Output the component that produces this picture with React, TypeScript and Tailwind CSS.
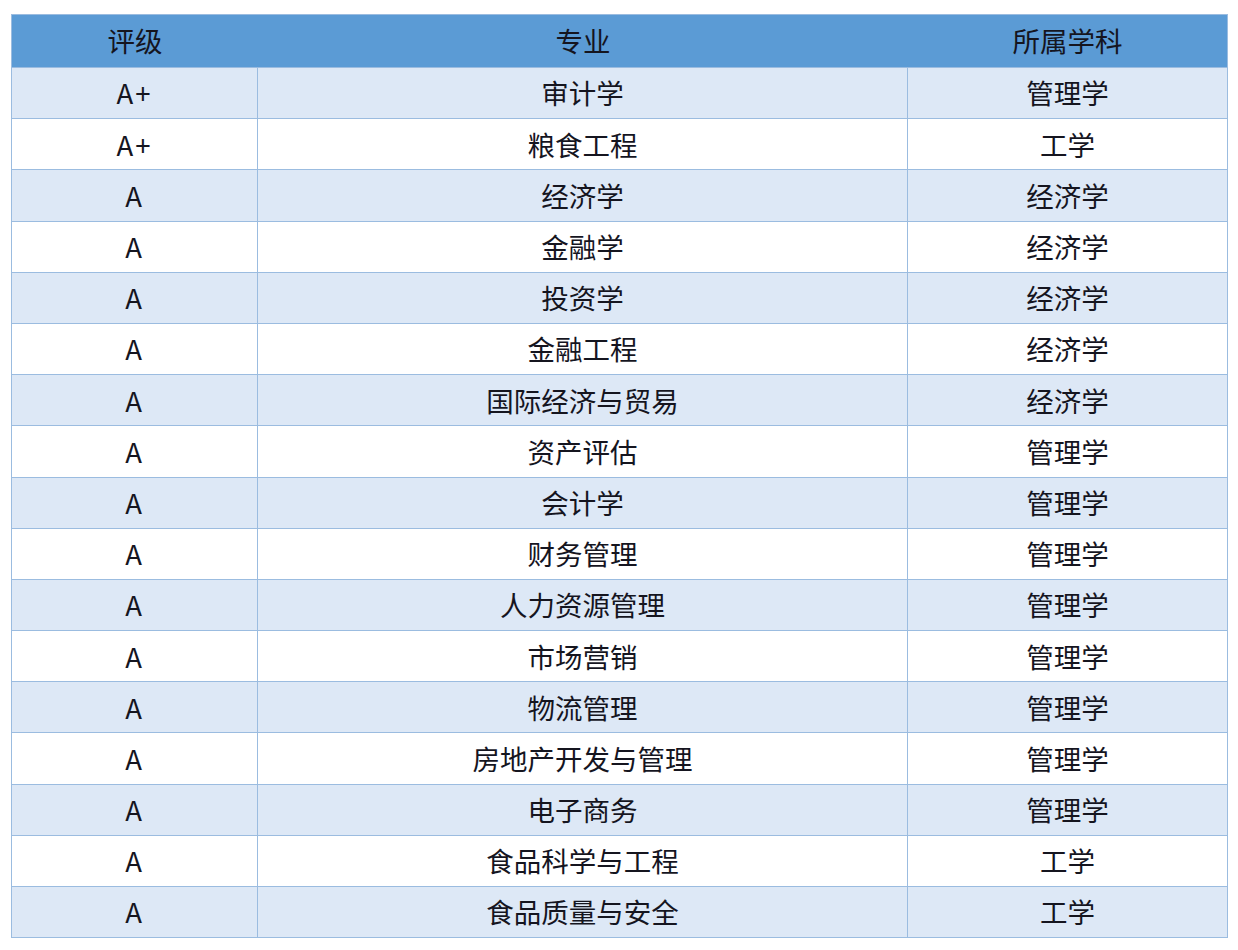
import React from 'react';

const rows = [
  ['A+', '审计学', '管理学'],
  ['A+', '粮食工程', '工学'],
  ['A', '经济学', '经济学'],
  ['A', '金融学', '经济学'],
  ['A', '投资学', '经济学'],
  ['A', '金融工程', '经济学'],
  ['A', '国际经济与贸易', '经济学'],
  ['A', '资产评估', '管理学'],
  ['A', '会计学', '管理学'],
  ['A', '财务管理', '管理学'],
  ['A', '人力资源管理', '管理学'],
  ['A', '市场营销', '管理学'],
  ['A', '物流管理', '管理学'],
  ['A', '房地产开发与管理', '管理学'],
  ['A', '电子商务', '管理学'],
  ['A', '食品科学与工程', '工学'],
  ['A', '食品质量与安全', '工学'],
];

export default function App() {
  return (
    <div
      className="w-[1238px] h-[950px] bg-white pt-[14px] pl-[11px]"
      style={{ fontFamily: '"Noto Sans CJK SC", "Noto Sans", sans-serif' }}
    >
      <div className="w-[1217px] border border-[#9bbce0] text-[27.5px] text-[#15151f]">
        {/* Header */}
        <div className="grid grid-cols-[246px_650px_1fr] h-[52px] bg-[#5b9bd5] items-center text-center">
          <div>评级</div>
          <div>专业</div>
          <div>所属学科</div>
        </div>

        {rows.map((r, i) => (
          <div
            key={i}
            className={`grid grid-cols-[246px_650px_1fr] h-[51.2px] border-t border-[#9bbce0] ${
              i % 2 === 0 ? 'bg-[#dde8f6]' : 'bg-white'
            }`}
          >
            <div className="flex items-center justify-center border-r border-[#9bbce0] tracking-[2px]">{r[0]}</div>
            <div className="flex items-center justify-center border-r border-[#9bbce0]">{r[1]}</div>
            <div className="flex items-center justify-center">{r[2]}</div>
          </div>
        ))}
      </div>
    </div>
  );
}
